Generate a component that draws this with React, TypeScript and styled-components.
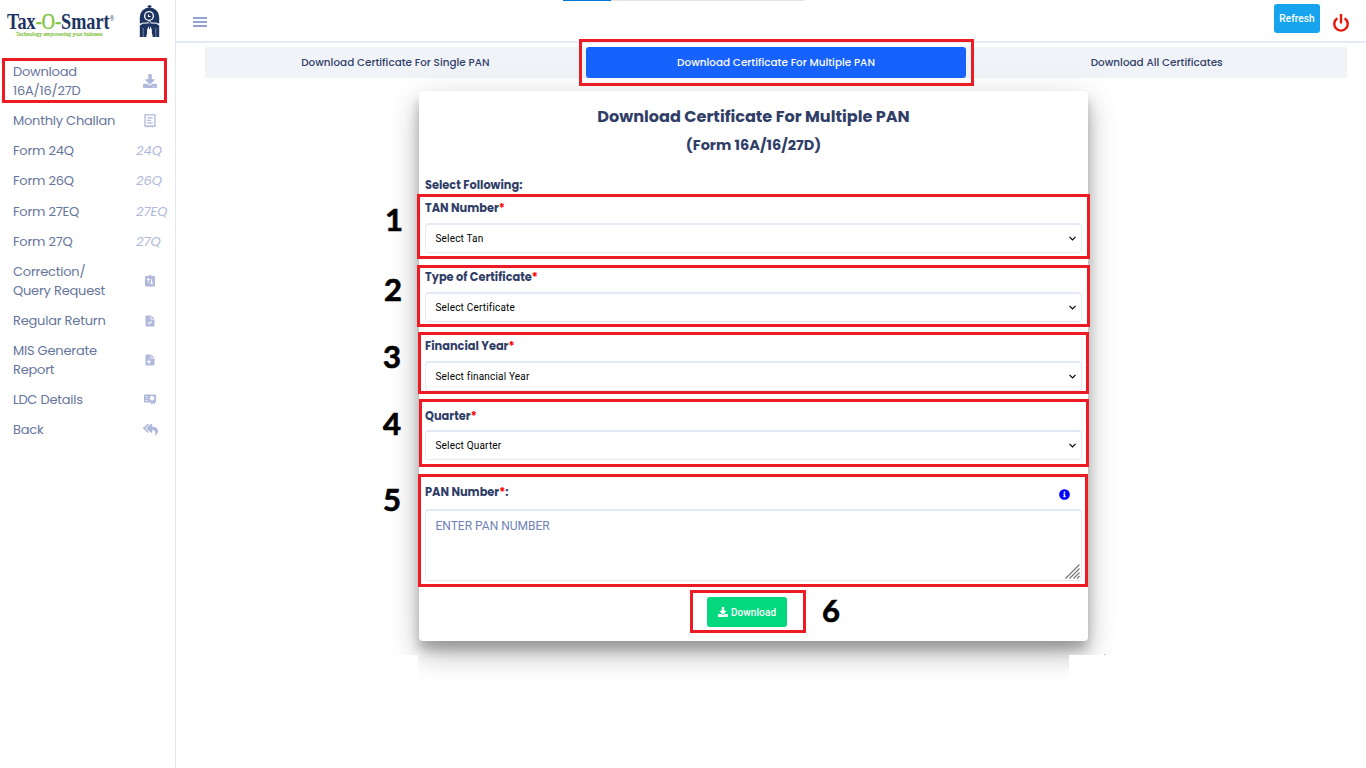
import React from "react";
import styled, { createGlobalStyle } from "styled-components";
import { FaDownload, FaInfoCircle, FaReplyAll } from "react-icons/fa";

const Global = createGlobalStyle`
  * { box-sizing: border-box; }
  body { margin: 0; background: #fff; overflow: hidden; font-family: Poppins, Inter, sans-serif; }
`;

const Page = styled.div`
  position: relative;
  display: flex;
  width: 1366px;
  height: 768px;
  overflow: hidden;
`;

const Sidebar = styled.aside`
  width: 176px;
  flex: none;
  border-right: 1px solid #e2e8f4;
`;

const Brand = styled.div`
  height: 62px;
  padding: 5px 0 0 7px;
  display: flex;
`;

const Wordmark = styled.div`
  width: 132px;
  padding-top: 5px;
  font-family: "Liberation Serif", serif;
`;

const BrandName = styled.div`
  width: 132px;
  height: 20px;
  font-size: 22.5px;
  font-weight: 700;
  line-height: 24px;
  color: #1d3461;
  white-space: nowrap;
  transform: scaleX(0.81);
  transform-origin: left;
  b { font-weight: 400; color: #83c441; -webkit-text-stroke: 0.5px #83c441; }
`;

const Registered = styled.span`
  display: inline-block;
  font-size: 8px;
  font-weight: 400;
  line-height: 8px;
  vertical-align: 8px;
`;

const Tagline = styled.div`
  width: 112px;
  margin: 0 0 0 9px;
  font-size: 7px;
  line-height: 8px;
  color: #78bd31;
  white-space: nowrap;
  -webkit-text-stroke: 0.2px #78bd31;
  transform: scaleX(0.79);
  transform-origin: left;
`;

const Nav = styled.nav`
  display: flex;
  flex-direction: column;
`;

const NavItem = styled.a<{ $h: number }>`
  display: flex;
  align-items: center;
  height: ${(p) => p.$h}px;
  padding-left: 13px;
  color: #66759b;
  font-size: 13px;
  line-height: 19px;
`;

const NavText = styled.span`
  width: 123px;
  flex: none;
  white-space: pre-line;
  letter-spacing: -0.22px;
`;

const NavIcon = styled.span`
  width: 28px;
  display: flex;
  justify-content: center;
  color: #b0b8dc;
`;

const NavCode = styled.i`
  color: #b0b8dc;
`;

const Main = styled.main`
  flex: 1;
  min-width: 0;
`;

const Header = styled.header`
  height: 43px;
  border-bottom: 2px solid #e4eaf6;
  display: flex;
  justify-content: space-between;
  padding: 4px 17px 0 17px;
`;

const Menu = styled.div`
  width: 14px;
  height: 10px;
  margin-top: 13px;
  display: flex;
  flex-direction: column;
  justify-content: space-between;
  span { height: 2px; background: #94a2cf; }
`;

const Actions = styled.div`
  display: flex;
  gap: 13px;
  svg { margin-top: 10px; }
`;

const Refresh = styled.button`
  width: 46px;
  height: 29px;
  padding: 0;
  border: 0;
  border-radius: 3px;
  background: #16a4ee;
  color: #fff;
  font: 500 10px Roboto, sans-serif;
  letter-spacing: 0.1px;
`;

const Tabs = styled.div`
  margin: 4px 19px 0 29px;
  height: 31px;
  display: flex;
  background: #f0f4f9;
`;

const Tab = styled.div<{ $active?: boolean }>`
  flex: 1;
  display: flex;
  align-items: center;
  justify-content: center;
  border-radius: 3px;
  font-size: 10.4px;
  font-weight: 500;
  letter-spacing: 0.03px;
  color: ${(p) => (p.$active ? "#fff" : "#303e67")};
  background: ${(p) => (p.$active ? "#1761fd" : "transparent")};
`;

const Card = styled.section`
  width: 669px;
  height: 550px;
  margin: 13px 0 0 243px;
  padding: 0 6px;
  border-radius: 4px;
  background: #fff;
  color: #303e67;
  box-shadow: 0 14px 28px rgba(0, 0, 0, 0.25), 0 0 40px rgba(0, 0, 0, 0.05), 0 9px 11px rgba(0, 0, 0, 0.21);
`;

const Title = styled.h1`
  margin: 0;
  padding-top: 13px;
  text-align: center;
  font-size: 16.1px;
  font-weight: 700;
  line-height: 25px;
`;

const Subtitle = styled.h2`
  margin: 0 0 12px;
  text-align: center;
  font-size: 14.5px;
  font-weight: 700;
  line-height: 32px;
`;

const Label = styled.div<{ $h?: number; $gap?: number }>`
  display: flex;
  align-items: center;
  height: ${(p) => p.$h ?? 22}px;
  margin-bottom: ${(p) => p.$gap ?? 4}px;
  font-size: 11.375px;
  font-weight: 700;
  white-space: nowrap;
  em { color: #f00; font-style: normal; }
`;

const Field = styled.div`
  height: 69px;
`;

const Select = styled.div`
  display: flex;
  align-items: center;
  justify-content: space-between;
  width: 657px;
  height: 30px;
  padding: 0 5px 0 9.5px;
  border: 1px solid #e3eaf5;
  border-top-width: 2px;
  border-radius: 4px;
  color: #000;
  font: 10px Roboto, sans-serif;
  letter-spacing: 0.18px;
`;

const InfoLabel = styled(Label)`
  justify-content: space-between;
  padding: 2px 12px 0 0;
  svg { color: #00f; margin-top: 4px; }
`;

const TextArea = styled.div`
  display: flex;
  justify-content: space-between;
  width: 657px;
  height: 72px;
  padding: 6px 1px 1px 9.5px;
  border: 1px solid #e3eaf5;
  border-top-width: 2px;
  border-radius: 4px;
  color: #7081b9;
  font: 12px/18px Roboto, sans-serif;
  svg { align-self: flex-end; }
`;

const Submit = styled.button`
  display: flex;
  align-items: center;
  justify-content: center;
  gap: 3px;
  width: 80px;
  height: 30px;
  margin: 16px 0 0 282px;
  padding: 0;
  border: 0;
  border-radius: 3px;
  background: #03d87f;
  color: #fff;
  font: 500 10px Roboto, sans-serif;
  letter-spacing: 0.1px;
`;

const Highlight = styled.div<{ $x: number; $y: number; $w: number; $h: number }>`
  position: absolute;
  left: ${(p) => p.$x}px;
  top: ${(p) => p.$y}px;
  width: ${(p) => p.$w}px;
  height: ${(p) => p.$h}px;
  border: 3px solid #ed1c24;
`;

const Step = styled.div<{ $x: number; $y: number }>`
  position: absolute;
  left: ${(p) => p.$x}px;
  top: ${(p) => p.$y}px;
  width: 20px;
  text-align: center;
  color: #000;
  font: 700 31px/32px Lato, sans-serif;
  -webkit-text-stroke: 0.7px #000;
`;

const Patch = styled.div<{ $x: number; $y: number; $w: number; $h: number; $c?: string }>`
  position: absolute;
  left: ${(p) => p.$x}px;
  top: ${(p) => p.$y}px;
  width: ${(p) => p.$w}px;
  height: ${(p) => p.$h}px;
  background: ${(p) => p.$c ?? "#fff"};
`;

const LogoMark = () => (
  <svg width="21" height="33" viewBox="0 0 21 33">
    <path d="M10.500 0v4M8.500 1.500h4" stroke="#1d3461" strokeWidth="1.400" />
    <path d="M.8 18.500V12a9.700 9.500 0 0 1 19.400 0v6.500z" fill="#1d3461" />
    <circle cx="10" cy="11" r="5" fill="#fff" />
    <circle cx="10" cy="11" r="3.700" fill="#1d3461" />
    <path d="M9.500 9.500v2h2" stroke="#fff" strokeWidth="1.200" fill="none" />
    <path d="M.8 32V20.500L4 18.500h13l3.200 2V32z" fill="#1d3461" />
    <path d="M1 19.500l3-1.500h4l2.500-1.500L13 18h4l3 1.500" stroke="#fff" strokeWidth=".9" fill="none" />
    <path d="M10.500 20.500c-2 2.500-2.800 4.500-2.300 7L7.200 32h6.600l-1-4.500c.5-2.500-.3-4.500-2.300-7z" fill="#fff" />
    <path d="M10.500 19v5" stroke="#1d3461" strokeWidth="1" />
    <path d="M4.200 23v9M16.800 23v9" stroke="#fff" strokeWidth=".4" />
  </svg>
);

const ReceiptIcon = () => (
  <svg width="12" height="14" viewBox="0 0 12 14" fill="none" stroke="currentColor" strokeWidth="1.300">
    <path d="M1 12.800V.8h10v12M1 12.500l1.200-.8 1.300.9 1.300-.9 1.200.9 1.200-.9 1.300.9 1.300-.9 1.200.8M3.300 3.800h5.400M3.300 6.300h3.500M3.300 8.800h5.400" />
  </svg>
);

const ClipboardArrowsIcon = () => (
  <svg width="10" height="12" viewBox="0 0 10 12">
    <path d="M1 1h2.500a1.500 1 0 0 1 3 0H9a1 1 0 0 1 1 1v8.500a1 1 0 0 1-1 1H1a1 1 0 0 1-1-1V2a1 1 0 0 1 1-1z" fill="currentColor" />
    <path d="M3.300 7.500V3.500M1.800 5l1.500-1.600L4.800 5M6.600 4v5M5.100 7.500l1.500 1.600 1.500-1.600" stroke="#fff" fill="none" />
  </svg>
);

const FileIcon = ({ mark }: { mark: string }) => (
  <svg width="10" height="12" viewBox="0 0 10 12">
    <path d="M1.200.5h5L9.500 4v6.300a1.200 1.200 0 0 1-1.200 1.200H1.700A1.200 1.200 0 0 1 .5 10.300V1.200A.7.700 0 0 1 1.200.5z" fill="currentColor" />
    <path d="M5.800 1v3.300h3.300" stroke="#fff" strokeWidth=".8" fill="none" />
    <path d={mark} stroke="#fff" strokeWidth="1.100" fill="none" />
  </svg>
);

const CertificateIcon = () => (
  <svg width="12" height="11" viewBox="0 0 12 11">
    <path d="M1 .5h10a1 1 0 0 1 1 1V8h-1v2.500L9.500 9.200 7 10.500V8.500H1a1 1 0 0 1-1-1v-6a1 1 0 0 1 1-1z" fill="currentColor" />
    <path d="M1.500 2.500h2M2 4.500h1.500M1.500 6.500h2" stroke="#fff" strokeWidth=".8" />
    <path d="M7.800 1.800l1 .6 1.200.2v1.200l.5 1-.9.7-.6 1-1.200-.2-1.200.1-.4-1.200-.7-.9.700-.9.300-1.100z" fill="#fff" />
  </svg>
);

const PowerIcon = () => (
  <svg width="16" height="18" viewBox="0 0 16 18" fill="none" stroke="#e6190b" strokeWidth="2.400">
    <path d="M8 0v9.500M4.400 4.300a6.700 6.700 0 1 0 7.200 0" />
  </svg>
);

const Chevron = () => (
  <svg width="7" height="5" viewBox="0 0 7 5" fill="none" stroke="#000" strokeWidth="1.200">
    <path d="M.5.8l3 3 3-3" />
  </svg>
);

const ResizeGrip = () => (
  <svg width="15" height="15" viewBox="0 0 15 15" stroke="#777" strokeWidth="1.200">
    <path d="M0.500 14.500l14-14M4.500 14.500l10-10M8.500 14.500l6-6M12 14.500l2.500-2.500" />
  </svg>
);

const navItems: { text: string; h: number; icon?: React.ReactNode; code?: string }[] = [
  { text: "Download\n16A/16/27D", h: 38, icon: <FaDownload size={14} /> },
  { text: "Monthly Challan", h: 41, icon: <ReceiptIcon /> },
  { text: "Form 24Q", h: 19, code: "24Q" },
  { text: "Form 26Q", h: 41, code: "26Q" },
  { text: "Form 27EQ", h: 20, code: "27EQ" },
  { text: "Form 27Q", h: 41, code: "27Q" },
  { text: "Correction/\nQuery Request", h: 38, icon: <ClipboardArrowsIcon /> },
  { text: "Regular Return", h: 41, icon: <FileIcon mark="M3.200 7.500l1.300 1.300 2.200-2.600" /> },
  { text: "MIS Generate\nReport", h: 38, icon: <FileIcon mark="M1.800 7.800h4.400M4 5.600v4.400" /> },
  { text: "LDC Details", h: 41, icon: <CertificateIcon /> },
  { text: "Back", h: 19, icon: <FaReplyAll size={15} /> },
];

const selects = [
  { label: "TAN Number", value: "Select Tan", h: 23 },
  { label: "Type of Certificate", value: "Select Certificate", h: 23 },
  { label: "Financial Year", value: "Select financial Year", h: 23 },
  { label: "Quarter", value: "Select Quarter", h: 24 },
];

const highlights = [
  [2, 58, 165, 45],
  [579, 39, 395, 47],
  [417, 194, 673, 65],
  [417, 265, 673, 62],
  [418, 332, 671, 62],
  [419, 399, 670, 68],
  [418, 474, 670, 113],
  [690, 590, 116, 43],
];

const steps = [
  [384, 203],
  [383, 273],
  [382, 340],
  [382, 407],
  [382, 483],
  [821, 594],
];

export default function App() {
  return (
    <Page>
      <Global />
      <Sidebar>
        <Brand>
          <Wordmark>
            <BrandName>Tax<b>-O-</b>Smart<Registered>®</Registered></BrandName>
            <Tagline>Technology empowering your buisness</Tagline>
          </Wordmark>
          <LogoMark />
        </Brand>
        <Nav>
          {navItems.map((n) => (
            <NavItem key={n.text} $h={n.h}>
              <NavText>{n.text}</NavText>
              {n.code ? <NavCode>{n.code}</NavCode> : <NavIcon>{n.icon}</NavIcon>}
            </NavItem>
          ))}
        </Nav>
      </Sidebar>
      <Main>
        <Header>
          <Menu><span /><span /><span /></Menu>
          <Actions>
            <Refresh>Refresh</Refresh>
            <PowerIcon />
          </Actions>
        </Header>
        <Tabs>
          <Tab>Download Certificate For Single PAN</Tab>
          <Tab $active>Download Certificate For Multiple PAN</Tab>
          <Tab>Download All Certificates</Tab>
        </Tabs>
        <Card>
          <Title>Download Certificate For Multiple PAN</Title>
          <Subtitle>(Form 16A/16/27D)</Subtitle>
          <Label $h={24} $gap={0}>Select Following:</Label>
          {selects.map((s) => (
            <Field key={s.label}>
              <Label $h={s.h} $gap={26 - s.h}>{s.label}<em>*</em></Label>
              <Select>{s.value}<Chevron /></Select>
            </Field>
          ))}
          <InfoLabel $h={36} $gap={0}>
            <span>PAN Number<em>*</em>:</span>
            <FaInfoCircle size={11} />
          </InfoLabel>
          <TextArea>ENTER PAN NUMBER<ResizeGrip /></TextArea>
          <Submit><FaDownload size={10} />Download</Submit>
        </Card>
      </Main>
      <Patch $x={563} $y={0} $w={48} $h={1} $c="#0078d7" />
      <Patch $x={611} $y={0} $w={193} $h={1} $c="#e5e5e5" />
      <Patch $x={370} $y={655} $w={48} $h={60} />
      <Patch $x={1069} $y={655} $w={80} $h={60} />
      <Patch $x={1104} $y={654} $w={1} $h={1} $c="#aaa" />
      {highlights.map(([x, y, w, h]) => (
        <Highlight key={`${x}-${y}`} $x={x} $y={y} $w={w} $h={h} />
      ))}
      {steps.map(([x, y], i) => (
        <Step key={i} $x={x} $y={y}>{i + 1}</Step>
      ))}
    </Page>
  );
}
